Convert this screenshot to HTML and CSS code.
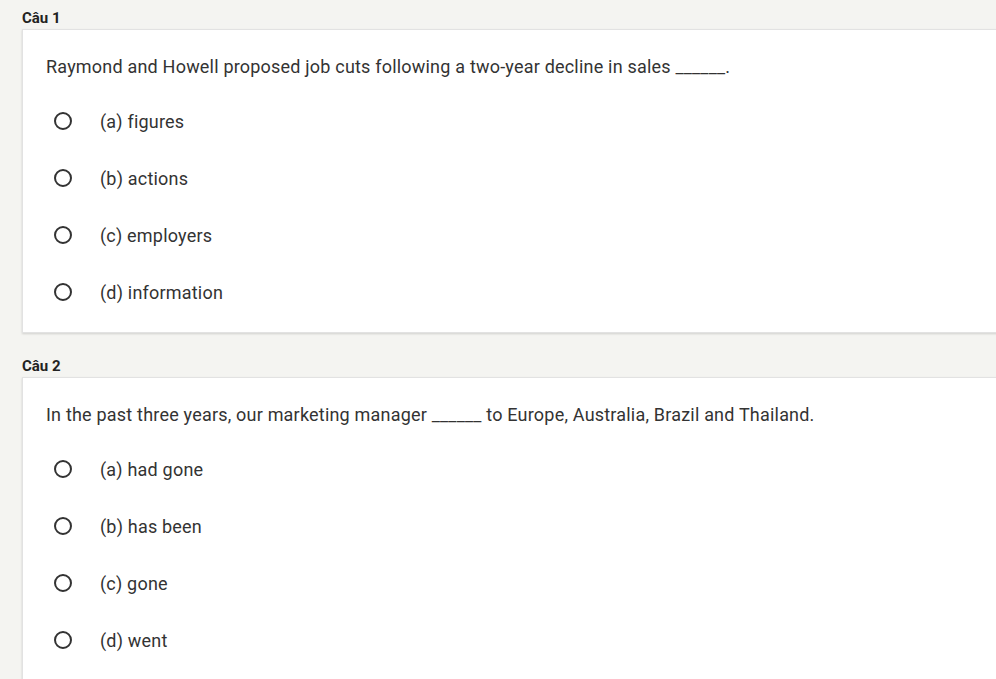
FILE: index.html
```html
<!DOCTYPE html>
<html lang="vi">
<head>
<meta charset="utf-8">
<title>Quiz</title>
<link rel="stylesheet" href="styles.css">
</head>
<body>
<div class="page">
  <section class="question">
    <div class="label">Câu 1</div>
    <div class="card">
      <p class="stem">Raymond and Howell proposed job cuts following a two-year decline in sales ______.</p>
      <ul class="options">
        <li class="option"><span class="radio"></span><span class="opt-text">(a) figures</span></li>
        <li class="option"><span class="radio"></span><span class="opt-text">(b) actions</span></li>
        <li class="option"><span class="radio"></span><span class="opt-text">(c) employers</span></li>
        <li class="option"><span class="radio"></span><span class="opt-text">(d) information</span></li>
      </ul>
    </div>
  </section>
  <section class="question">
    <div class="label">Câu 2</div>
    <div class="card">
      <p class="stem">In the past three years, our marketing manager ______ to Europe, Australia, Brazil and Thailand.</p>
      <ul class="options">
        <li class="option"><span class="radio"></span><span class="opt-text">(a) had gone</span></li>
        <li class="option"><span class="radio"></span><span class="opt-text">(b) has been</span></li>
        <li class="option"><span class="radio"></span><span class="opt-text">(c) gone</span></li>
        <li class="option"><span class="radio"></span><span class="opt-text">(d) went</span></li>
      </ul>
    </div>
  </section>
</div>
</body>
</html>
```
FILE: styles.css
```css
html, body {
  margin: 0;
  padding: 0;
  background: #f4f4f1;
  overflow: hidden;
}
body {
  font-family: Roboto, "Noto Sans", sans-serif;
  color: #333;
}
.page {
  padding: 9px 0 0 22px;
  display: flex;
  flex-direction: column;
}
.question {
  display: flex;
  flex-direction: column;
  margin-bottom: 24px;
}
.label {
  font-size: 15px;
  font-weight: 700;
  color: #222;
  line-height: 18px;
  height: 20px;
}
.card {
  background: #fff;
  margin-right: -20px;
  border: 1px solid #e2e2e2;
  box-shadow: 0 1px 2px rgba(0,0,0,0.15);
  padding: 25px 0 28px 23px;
}
.stem {
  margin: 0;
  font-size: 18px;
  line-height: 24px;
  letter-spacing: 0.2px;
  color: #333;
}
.options {
  list-style: none;
  margin: 30px 0 0 0;
  padding: 0;
  display: flex;
  flex-direction: column;
  gap: 33px;
}
.option {
  display: flex;
  align-items: center;
  height: 24px;
  font-size: 18px;
  letter-spacing: 0.2px;
  color: #333;
}
.radio {
  box-sizing: border-box;
  width: 18px;
  height: 18px;
  border: 2px solid #333;
  border-radius: 50%;
  margin-left: 8px;
  margin-right: 28px;
  flex: none;
}
```
